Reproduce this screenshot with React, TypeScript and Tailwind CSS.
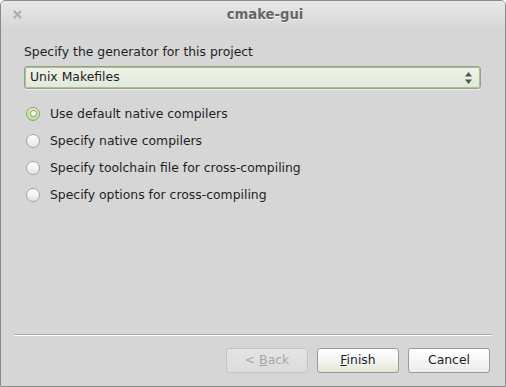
import React from "react";

function Radio({ checked, label }: { checked?: boolean; label: string }) {
  return (
    <div className="flex h-[27px] items-center">
      {checked ? (
        <span className="ml-[2px] flex h-[14px] w-[14px] items-center justify-center rounded-full border border-[#86ad56] bg-gradient-to-b from-[#dfeccf] to-[#bfd79e]">
          <span className="h-[7px] w-[7px] rounded-full border border-[#7a9d4e] bg-white" />
        </span>
      ) : (
        <span className="ml-[2px] h-[14px] w-[14px] rounded-full border border-[#a2a2a2] bg-gradient-to-b from-white to-[#e6e6e6]" />
      )}
      <span className="ml-[10px] text-[12.4px] leading-[16px] text-[#1e1e1e]">{label}</span>
    </div>
  );
}

function Button({ children, disabled, def }: { children: React.ReactNode; disabled?: boolean; def?: boolean }) {
  const cls = disabled
    ? "border-[#c4c4c4] bg-gradient-to-b from-[#e4e4e4] to-[#dcdcdc] text-[#a6a6a6]"
    : def
    ? "border-[#9a9a9a] bg-gradient-to-b from-white via-[#f4f4f4] to-[#dde8cf] text-[#1e1e1e]"
    : "border-[#9a9a9a] bg-gradient-to-b from-white to-[#ececec] text-[#1e1e1e]";
  return (
    <div className={`flex h-[25px] w-[82px] items-center justify-center rounded-[3px] border text-[12.4px] ${cls}`}>
      {children}
    </div>
  );
}

export default function App() {
  return (
    <div
      className="flex h-[387px] w-[506px] flex-col overflow-hidden rounded-t-[5px] border border-[#8a8a8a] bg-[#d6d6d6]"
      style={{ fontFamily: '"DejaVu Sans", "Liberation Sans", sans-serif' }}
    >
      <div className="relative flex h-[28px] shrink-0 items-center justify-center bg-gradient-to-b from-[#e8e8e8] to-[#d6d6d6] pl-[24px]">
        <svg className="absolute left-[12px] top-[9px]" width="9" height="9" viewBox="0 0 9 9">
          <path d="M1.5 1.5 L7.5 7.5 M7.5 1.5 L1.5 7.5" stroke="#a9a9a9" strokeWidth="2" strokeLinecap="round" />
        </svg>
        <span className="text-[13.2px] font-bold text-[#666666] [text-shadow:0_1px_0_#f4f4f4]">cmake-gui</span>
      </div>
      <div className="flex flex-1 flex-col">
        <div className="px-[23px] pt-[15px]">
          <div className="text-[12.4px] leading-[16px] text-[#1e1e1e]">Specify the generator for this project</div>
          <div className="mt-[6px] h-[23px] w-[457px] rounded-[3px] border border-[#9c9c9c] shadow-[0_1px_0_#eeeeee]">
            <div className="flex h-full items-center justify-between rounded-[2px] border border-[#a8c580] bg-gradient-to-b from-[#eef3e8] to-[#e2e9da] pl-[4px] pr-[6px]">
              <span className="text-[12.4px] text-[#1e1e1e]">Unix Makefiles</span>
              <svg width="9" height="14" viewBox="0 0 9 14">
                <path d="M4.5 1 L8 5.5 L1 5.5 Z" fill="#555555" />
                <path d="M4.5 13 L8 8.5 L1 8.5 Z" fill="#555555" />
              </svg>
            </div>
          </div>
          <div className="mt-[11px] flex flex-col">
            <Radio checked label="Use default native compilers" />
            <Radio label="Specify native compilers" />
            <Radio label="Specify toolchain file for cross-compiling" />
            <Radio label="Specify options for cross-compiling" />
          </div>
        </div>
        <div className="flex-1" />
        <div className="mx-[13px] h-[2px] border-t border-b border-t-[#a9a9a9] border-b-white" />
        <div className="flex justify-end gap-[9px] pb-[13px] pr-[15px] pt-[12px]">
          <Button disabled>
            <span>&lt; <span className="underline underline-offset-1">B</span>ack</span>
          </Button>
          <Button def>
            <span><span className="underline underline-offset-1">F</span>inish</span>
          </Button>
          <Button>Cancel</Button>
        </div>
      </div>
    </div>
  );
}
